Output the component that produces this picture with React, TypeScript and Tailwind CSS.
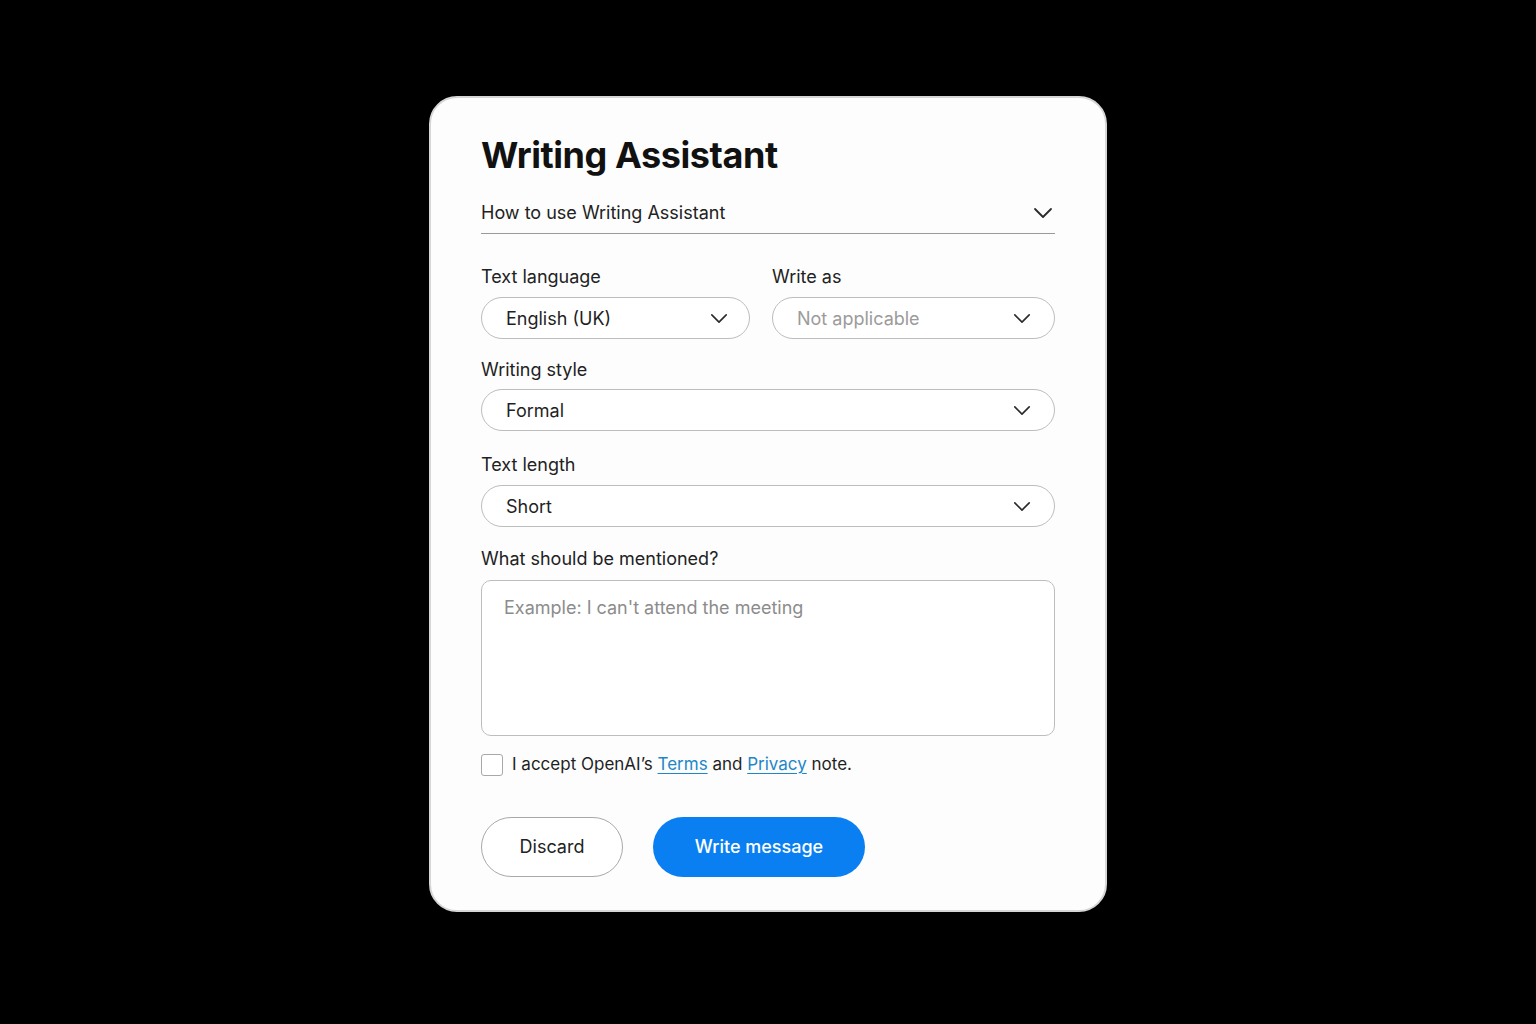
import React from "react";

const Chevron = ({ className = "" }: { className?: string }) => (
  <svg viewBox="0 0 20 12" className={className} fill="none" stroke="currentColor" strokeWidth={1.8} strokeLinecap="round" strokeLinejoin="round">
    <path d="M2 2l8 8 8-8" />
  </svg>
);

const Select = ({ value, muted = false, pr = "pr-[23px]" }: { value: string; muted?: boolean; pr?: string }) => (
  <div className={`flex h-[42px] items-center justify-between rounded-[21px] border border-[#bdbdbd] bg-white pl-6 ${pr}`}>
    <span className={`text-[18px] ${muted ? "text-[#9b9b9b]" : "text-[#1f1f1f]"}`}>{value}</span>
    <Chevron className="h-[11px] w-[18px] text-[#2a2a2a]" />
  </div>
);

const Label = ({ children }: { children: React.ReactNode }) => (
  <div className="h-6 text-[18px] leading-6 text-[#222]">{children}</div>
);

export default function App() {
  return (
    <div
      className="flex min-h-[1024px] w-full items-start justify-center bg-black pt-[96px]"
      style={{ fontFamily: "Inter, 'Noto Sans', 'Liberation Sans', sans-serif" }}
    >
      <div className="w-[678px] rounded-[28px] border-2 border-[#d6d6d6] bg-[#fdfdfd] px-[50px] pt-[35px] pb-[33px]">
        <h1 className="h-[44px] text-[36px] font-bold leading-[44px] tracking-[-0.012em] text-[#111]">
          Writing Assistant
        </h1>

        <div className="mt-6 flex items-center justify-between border-b border-[#9a9a9a] pb-2">
          <span className="text-[18px] leading-6 text-[#222]">How to use Writing Assistant</span>
          <Chevron className="mr-[2px] h-[12px] w-[20px] text-[#2a2a2a]" />
        </div>

        <div className="mt-[31px] grid grid-cols-[269px_1fr] gap-x-[22px]">
          <div>
            <Label>Text language</Label>
            <div className="mt-2">
              <Select value="English (UK)" pr="pr-[21px]" />
            </div>
          </div>
          <div>
            <Label>Write as</Label>
            <div className="mt-2">
              <Select value="Not applicable" muted />
            </div>
          </div>
        </div>

        <div className="mt-[19px]">
          <Label>Writing style</Label>
          <div className="mt-[7px]">
            <Select value="Formal" />
          </div>
        </div>

        <div className="mt-[22px]">
          <Label>Text length</Label>
          <div className="mt-2">
            <Select value="Short" />
          </div>
        </div>

        <div className="mt-5">
          <Label>What should be mentioned?</Label>
          <div className="mt-[9px] h-[156px] rounded-[10px] border border-[#bdbdbd] bg-white px-[22px] pt-[13px]">
            <span className="text-[18px] text-[#8c8c8c]">Example: I can't attend the meeting</span>
          </div>
        </div>

        <div className="mt-[16px] flex items-center gap-[9px]">
          <div className="h-[22px] w-[22px] rounded-[3px] border border-[#a8a8a8] bg-white" />
          <span className="text-[17px] text-[#1f1f1f]">
            I accept OpenAI’s{" "}
            <span className="text-[#1e87c8] underline underline-offset-[3px]">Terms</span> and{" "}
            <span className="text-[#1e87c8] underline underline-offset-[3px]">Privacy</span> note.
          </span>
        </div>

        <div className="mt-[39px] flex items-center gap-[30px]">
          <button className="h-[60px] w-[142px] rounded-full border border-[#a8a8a8] bg-white text-[18px] text-[#222]">
            Discard
          </button>
          <button className="h-[60px] w-[212px] rounded-full bg-[#0a7ff2] text-[18px] font-medium text-white">
            Write message
          </button>
        </div>
      </div>
    </div>
  );
}
